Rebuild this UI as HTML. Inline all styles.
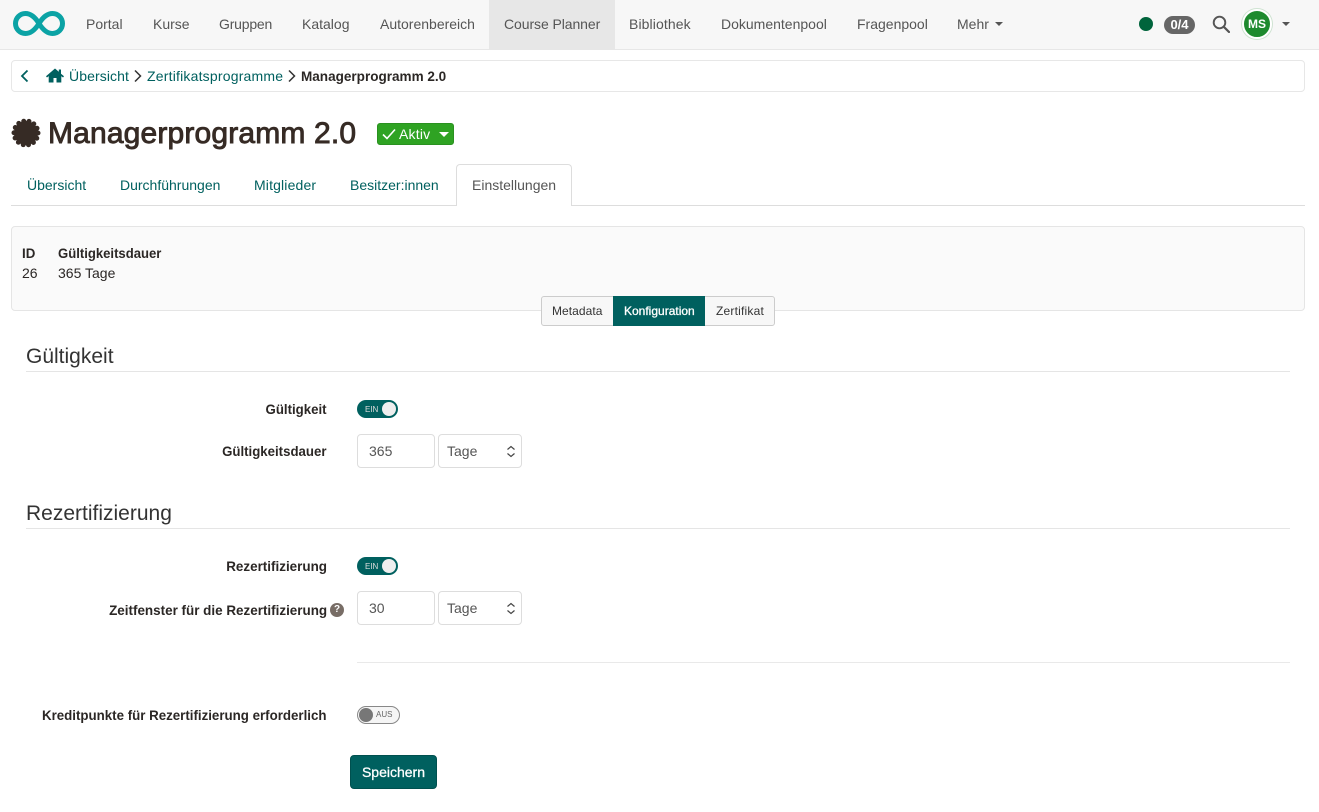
<!DOCTYPE html>
<html lang="de"><head><meta charset="utf-8"><title>Managerprogramm 2.0</title>
<style>
html,body{margin:0;padding:0;background:#fff}
body{position:relative;width:1319px;height:812px;overflow:hidden;font-family:"Liberation Sans",Arial,sans-serif;font-size:14px;color:#333}
.a,.t{position:absolute;box-sizing:border-box}
.t{white-space:nowrap;line-height:20px;height:20px}
.n{color:#555;top:14px}
.l{color:#00605f}
.b{font-weight:700;color:#2b2725;transform-origin:left center}
.r{text-align:right;right:992px;transform-origin:right center}
.h{font-size:21px;line-height:26px;height:26px;color:#333}
.inp{background:#fff;border:1px solid #ddd;border-radius:4px;height:34px;color:#555;line-height:32px;padding-left:11px}
.hr{height:1px;background:#e5e5e5}
svg{position:absolute;display:block}
</style></head><body>
<div class="a" style="left:0;top:0;width:1319px;height:50px;background:#f7f7f7;border-bottom:1px solid #e7e7e7"></div>
<div class="a" style="left:489px;top:0;width:126px;height:49px;background:#e7e7e7"></div>
<svg style="left:12px;top:10px" width="54" height="27" viewBox="12 10 54 27"><path d="M39 23.500C35 17 31 13.500 25.500 13.500a10 10 0 0 0 0 20C31 33.500 35 30 39 23.500C43 17 47 13.500 52.500 13.500a10 10 0 0 1 0 20C47 33.500 43 30 39 23.500Z" fill="none" stroke="#0ba3a5" stroke-width="5"/></svg>
<span class="t n" style="left:86px">Portal</span>
<span class="t n" style="left:153px">Kurse</span>
<span class="t n" style="left:219px;letter-spacing:-.2px">Gruppen</span>
<span class="t n" style="left:302px">Katalog</span>
<span class="t n" style="left:380px">Autorenbereich</span>
<span class="t n" style="left:504px;letter-spacing:-.08px">Course Planner</span>
<span class="t n" style="left:629px;letter-spacing:.1px">Bibliothek</span>
<span class="t n" style="left:721px">Dokumentenpool</span>
<span class="t n" style="left:857px">Fragenpool</span>
<span class="t n" style="left:957px">Mehr</span>
<svg style="left:995px;top:22px" width="8" height="5"><path d="M0 0H8L4 4Z" fill="#555"/></svg>
<div class="a" style="left:1139px;top:17px;width:14px;height:14px;border-radius:50%;background:#00643c"></div>
<div class="a" style="left:1164px;top:16px;width:31px;height:18px;border-radius:9px;background:#666;color:#fff;font-weight:700;font-size:13px;line-height:18px;text-align:center">0/4</div>
<svg style="left:1212px;top:15px" width="18" height="18" viewBox="0 0 18 18"><circle cx="7.500" cy="7.500" r="5.800" fill="none" stroke="#555" stroke-width="1.900"/><path d="M11.800 11.800L17 17" stroke="#555" stroke-width="2.200" stroke-linecap="round"/></svg>
<div class="a" style="left:1242px;top:9px;width:30px;height:30px;border-radius:50%;background:#1e8a2e;border:2px solid #fff;box-shadow:0 0 0 1px #cfe3d2;color:#fff;font-weight:700;font-size:12px;line-height:26px;text-align:center">MS</div>
<svg style="left:1282px;top:22px" width="9" height="5"><path d="M0 0H8L4 4Z" fill="#555"/></svg>

<div class="a" style="left:11px;top:60px;width:1294px;height:32px;border:1px solid #e7e7e7;border-radius:4px;background:#fff"></div>
<svg style="left:19px;top:69px" width="12" height="14" viewBox="0 0 12 14"><path d="M8.500 1.500L3 7L8.500 12.500" fill="none" stroke="#00605f" stroke-width="1.800"/></svg>
<svg style="left:46px;top:68px" width="18" height="15" viewBox="0 0 18 15"><path d="M9 .5L0 8.300L1 9.500L2.700 8.100V14.500H7.500V10H10.500V14.500H15.300V8.100L17 9.500L18 8.300L15 5.700V1.500H12.800V3.800Z" fill="#00605f"/></svg>
<span class="t l" style="left:69px;top:66px;letter-spacing:.1px">Übersicht</span>
<svg style="left:133px;top:69px" width="10" height="14" viewBox="0 0 10 14"><path d="M2 1.500L7.500 7L2 12.500" fill="none" stroke="#333" stroke-width="1.500"/></svg>
<span class="t l" style="left:147px;top:66px;letter-spacing:.2px">Zertifikatsprogramme</span>
<svg style="left:287px;top:69px" width="10" height="14" viewBox="0 0 10 14"><path d="M2 1.500L7.500 7L2 12.500" fill="none" stroke="#333" stroke-width="1.500"/></svg>
<span class="t b" style="left:301px;top:66px;transform:scaleX(.967)">Managerprogramm 2.0</span>

<svg style="left:10px;top:117px" width="32" height="32" viewBox="0 0 32 32"><circle cx="16" cy="16" r="12" fill="#362b25"/><circle cx="16" cy="16" r="12" fill="none" stroke="#362b25" stroke-width="5" stroke-linecap="round" stroke-dasharray="0 5.386"/></svg>
<span class="t" style="left:48px;top:114px;font-size:30px;line-height:40px;height:40px;color:#362b25;-webkit-text-stroke:.9px #362b25;letter-spacing:.16px">Managerprogramm 2.0</span>
<div class="a" style="left:377px;top:123px;width:77px;height:22px;background:#2fa323;border:1px solid #2a9120;border-radius:3px"></div>
<svg style="left:382px;top:128px" width="14" height="12" viewBox="0 0 14 12"><path d="M1 6.500L5 10.500L13 1.500" fill="none" stroke="#fff" stroke-width="1.600"/></svg>
<span class="t" style="left:399px;top:124px;color:#fff;letter-spacing:.2px">Aktiv</span>
<svg style="left:439px;top:132px" width="10" height="6"><path d="M0 0H10L5 5Z" fill="#fff"/></svg>

<div class="a hr" style="left:11px;top:205px;width:1294px;background:#ddd"></div>
<span class="t l" style="left:27px;top:175px">Übersicht</span>
<span class="t l" style="left:120px;top:175px">Durchführungen</span>
<span class="t l" style="left:254px;top:175px;letter-spacing:.15px">Mitglieder</span>
<span class="t l" style="left:350px;top:175px">Besitzer:innen</span>
<div class="a" style="left:456px;top:164px;width:116px;height:42px;background:#fff;border:1px solid #ddd;border-bottom:0;border-radius:4px 4px 0 0"></div>
<span class="t" style="left:472px;top:175px;color:#555">Einstellungen</span>

<div class="a" style="left:11px;top:226px;width:1294px;height:85px;background:#fafafa;border:1px solid #e5e5e5;border-radius:4px"></div>
<span class="t b" style="left:22px;top:243px;transform:scaleX(.95)">ID</span>
<span class="t b" style="left:58px;top:243px;transform:scaleX(.936)">Gültigkeitsdauer</span>
<span class="t" style="left:22px;top:263px;color:#2b2725">26</span>
<span class="t" style="left:58px;top:263px;color:#2b2725">365 Tage</span>

<div class="a" style="left:541px;top:296px;width:234px;height:30px;background:#f7f7f7;border:1px solid #ccc;border-radius:3px"></div>
<div class="a" style="left:613px;top:296px;width:92px;height:30px;background:#00605f"></div>
<span class="t" style="left:552px;top:301px;font-size:12px;color:#333;letter-spacing:.05px">Metadata</span>
<span class="t" style="left:624px;top:301px;font-size:12px;color:#fff;-webkit-text-stroke:.3px #fff">Konfiguration</span>
<span class="t" style="left:716px;top:301px;font-size:12px;color:#333;letter-spacing:.2px">Zertifikat</span>

<span class="t h" style="left:26px;top:344px">Gültigkeit</span>
<div class="a hr" style="left:26px;top:371px;width:1264px"></div>
<span class="t b r" style="top:399px;transform:scaleX(.945)">Gültigkeit</span>
<div class="a" style="left:357px;top:400px;width:41px;height:18px;border-radius:9px;background:#00605f"></div>
<span class="t" style="left:365px;top:400px;font-size:8px;color:#ddd">EIN</span>
<div class="a" style="left:382px;top:402px;width:14px;height:14px;border-radius:50%;background:#eee"></div>
<span class="t b r" style="top:441px;right:992.500px;transform:scaleX(.945)">Gültigkeitsdauer</span>
<div class="a inp" style="left:357px;top:434px;width:78px">365</div>
<div class="a inp" style="left:438px;top:434px;width:84px;padding-left:8px">Tage</div>
<svg style="left:506px;top:445px" width="10" height="13" viewBox="0 0 10 13"><path d="M1.500 4.500L5 1.500L8.500 4.500M1.500 8.500L5 11.500L8.500 8.500" fill="none" stroke="#444" stroke-width="1.200"/></svg>

<span class="t h" style="left:26px;top:501px">Rezertifizierung</span>
<div class="a hr" style="left:26px;top:528px;width:1264px"></div>
<span class="t b r" style="top:556px;transform:scaleX(.96)">Rezertifizierung</span>
<div class="a" style="left:357px;top:557px;width:41px;height:18px;border-radius:9px;background:#00605f"></div>
<span class="t" style="left:365px;top:557px;font-size:8px;color:#ddd">EIN</span>
<div class="a" style="left:382px;top:559px;width:14px;height:14px;border-radius:50%;background:#eee"></div>
<span class="t b r" style="top:600px;transform:scaleX(.96)">Zeitfenster für die Rezertifizierung</span>
<div class="a" style="left:330px;top:603px;width:14px;height:14px;border-radius:50%;background:#786d66;color:#fff;font-weight:700;font-size:10px;line-height:14px;text-align:center">?</div>
<div class="a inp" style="left:357px;top:591px;width:78px">30</div>
<div class="a inp" style="left:438px;top:591px;width:84px;padding-left:8px">Tage</div>
<svg style="left:506px;top:602px" width="10" height="13" viewBox="0 0 10 13"><path d="M1.500 4.500L5 1.500L8.500 4.500M1.500 8.500L5 11.500L8.500 8.500" fill="none" stroke="#444" stroke-width="1.200"/></svg>
<div class="a hr" style="left:357px;top:662px;width:933px;background:#e9e9e9"></div>

<span class="t b r" style="top:705px;right:992.500px;transform:scaleX(.95)">Kreditpunkte für Rezertifizierung erforderlich</span>
<div class="a" style="left:357px;top:706px;width:43px;height:18px;border-radius:9px;background:#f5f5f5;border:1px solid #888"></div>
<div class="a" style="left:359px;top:708px;width:14px;height:14px;border-radius:50%;background:#777"></div>
<span class="t" style="left:376px;top:705px;font-size:8px;color:#666">AUS</span>

<div class="a" style="left:350px;top:755px;width:87px;height:34px;background:#00605f;border:1px solid #00504f;border-radius:4px;color:#fff;-webkit-text-stroke:.3px #fff;line-height:32px;text-align:center">Speichern</div>
</body></html>
